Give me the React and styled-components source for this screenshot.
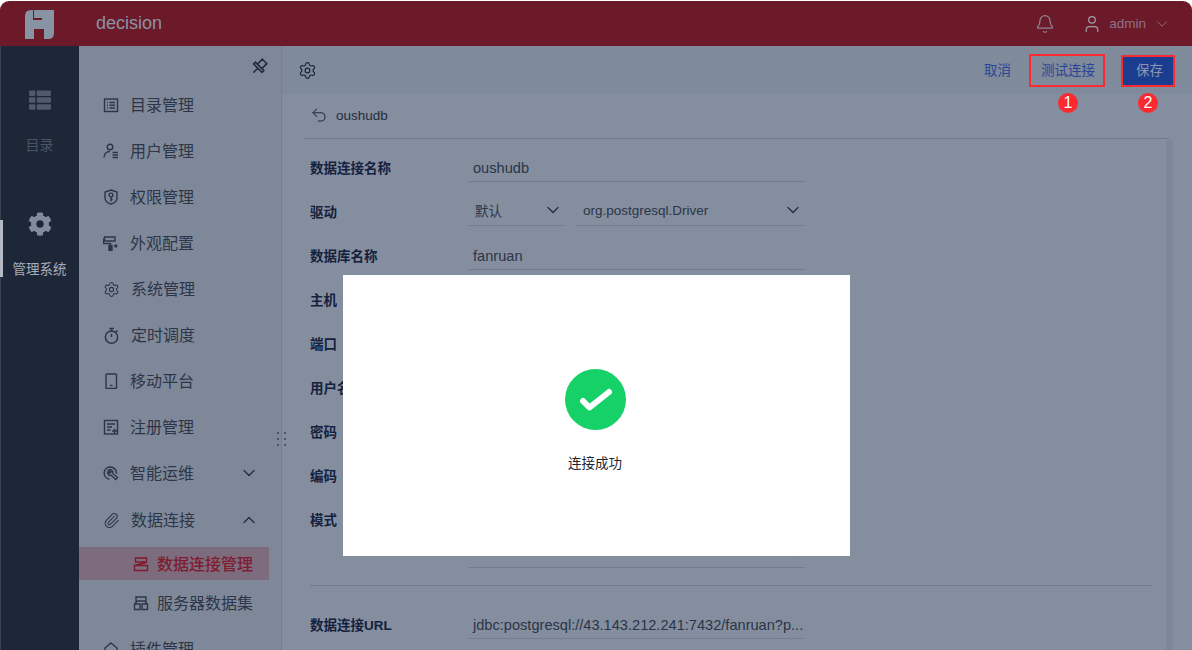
import React from 'react';
import styled, { createGlobalStyle } from 'styled-components';
import { Bell, User, ChevronDown, ChevronUp, Undo2, Paperclip, Settings } from 'lucide-react';
import { FaCog, FaThList } from 'react-icons/fa';

const Global = createGlobalStyle`
  html, body { margin: 0; padding: 0; background: #fff; }
  body { font-family: "Liberation Sans", "Noto Sans CJK SC", sans-serif; overflow: hidden; }
  * { box-sizing: border-box; }
`;

const Page = styled.div`
  position: relative;
  width: 1192px;
  height: 650px;
  padding-top: 1px;
  overflow: hidden;
  background: #fff;
`;
const Frame = styled.div`
  width: 100%;
  height: 649px;
  display: flex;
  flex-direction: column;
  border-radius: 9px 9px 0 0;
  overflow: hidden;
`;
const Header = styled.header`
  flex: 0 0 45px;
  display: flex;
  align-items: center;
  background: #6c1929;
  color: #8a93a4;
`;
const LogoBox = styled.div`
  width: 96px;
  padding-left: 25px;
  display: flex;
  margin-top: 1px;
`;
const Brand = styled.div`
  flex: 1;
  font-size: 18px;
`;
const Account = styled.div`
  display: flex;
  align-items: center;
  padding-right: 21px;
  font-size: 13.5px;
  color: #8a7488;
`;
const BellBox = styled.span`
  display: flex;
  margin-right: 27px;
  color: #8d8493;
`;
const UserBox = styled.span`
  display: flex;
  margin-right: 7px;
  color: #a19aa6;
`;
const ArrowBox = styled.span`
  display: flex;
  margin-left: 7px;
`;
const Body = styled.div`
  flex: 1;
  display: flex;
  min-height: 0;
`;
const Rail = styled.nav`
  flex: 0 0 79px;
  display: flex;
  flex-direction: column;
  background: #1e2738;
  border-left: 1px solid #39414f;
`;
const RailItem = styled.div`
  height: ${p => p.$h}px;
  display: flex;
  flex-direction: column;
  align-items: center;
  gap: ${p => p.$gap}px;
  padding-top: ${p => p.$top}px;
  margin-left: -1px;
  font-size: ${p => p.$size}px;
  color: ${p => p.$color};
  border-left: 3px solid ${p => p.$bar || 'transparent'};
  padding-right: 3px;
`;
const RailGear = styled.span`
  display: flex;
  margin-top: -8px;
`;
const Sidebar = styled.aside`
  flex: 0 0 203px;
  display: flex;
  flex-direction: column;
  padding-right: 12px;
  background: #7f8898;
  border-right: 1px solid #757f8f;
  color: #2c3648;
`;
const PinRow = styled.div`
  height: 36px;
  flex: none;
  display: flex;
  justify-content: flex-end;
  padding: 12px 1px 0 0;
`;
const MenuItem = styled.div`
  flex: none;
  height: 46px;
  margin-top: ${p => p.$mt || 0}px;
  display: flex;
  align-items: center;
  gap: 11px;
  padding: 0 10px 0 24px;
  font-size: 16px;
`;
const MenuIcon = styled.span`
  flex: 0 0 16px;
  height: 18px;
  display: flex;
  align-items: center;
  justify-content: center;
`;
const MenuLabel = styled.span`
  flex: 1;
  padding-bottom: 2px;
`;
const SubItem = styled.div`
  flex: none;
  height: 33px;
  margin-top: ${p => p.$mt}px;
  margin-bottom: ${p => p.$mb}px;
  display: flex;
  align-items: center;
  gap: 8px;
  padding-left: 54px;
  font-size: 16px;
  font-weight: ${p => (p.$active ? 500 : 400)};
  color: ${p => (p.$active ? '#7f1d30' : '#2c3648')};
  background: ${p => (p.$active ? '#7c6c7e' : 'transparent')};
`;
const SubLabel = styled.span`
  padding-bottom: 2px;
`;
const Main = styled.main`
  flex: 1;
  display: flex;
  flex-direction: column;
  min-width: 0;
  position: relative;
`;
const Toolbar = styled.div`
  flex: 0 0 48px;
  display: flex;
  align-items: center;
  padding: 1px 17px 0 16px;
  background: #7f8a9a;
  color: #1c2638;
`;
const ToolSpacer = styled.div`
  flex: 1;
`;
const LinkButton = styled.div`
  font-size: 13.5px;
  color: #2b4499;
  margin-right: 18px;
  padding-bottom: 4px;
`;
const TestButton = styled.div`
  position: relative;
  width: 76px;
  height: 33px;
  display: flex;
  align-items: center;
  justify-content: center;
  padding: 0 0 3px 2px;
  font-size: 13.5px;
  color: #2b4499;
  border: 2px solid #fb2a30;
  margin-right: 16px;
`;
const SaveButton = styled.div`
  position: relative;
  width: 54px;
  height: 32px;
  display: flex;
  align-items: center;
  justify-content: center;
  padding: 0 0 4px 3px;
  font-size: 13.5px;
  color: #8b96ae;
  background: #1b3d8f;
  border: 2px solid #fb2a30;
`;
const Badge = styled.span`
  position: absolute;
  top: calc(100% + 8px);
  left: calc(50% + ${p => p.$dx || 0}px);
  transform: translateX(-50%);
  width: 20px;
  height: 20px;
  border-radius: 50%;
  display: flex;
  align-items: center;
  justify-content: center;
  background: #fb2a30;
  color: #fff;
  font-size: 16px;
`;
const Content = styled.div`
  flex: 1;
  display: flex;
  flex-direction: column;
  padding: 0 23px 0 22px;
  background: #858e9e;
  min-height: 0;
`;
const BackRow = styled.div`
  flex: 0 0 44px;
  display: flex;
  align-items: center;
  gap: 8px;
  padding: 0 0 2px 6px;
  font-size: 13.5px;
  color: #222d40;
`;
const Card = styled.section`
  position: relative;
  flex: 1;
  padding: 7px 0 0 6px;
  border-top: 1px solid #717b8b;
  &::after {
    content: '';
    position: absolute;
    top: 1px;
    right: -4px;
    bottom: 0;
    width: 7px;
    border-radius: 4px 4px 0 0;
    background: #7d8797;
  }
`;
const Row = styled.div`
  height: 44px;
  display: flex;
  align-items: center;
`;
const Label = styled.div`
  flex: 0 0 158px;
  padding-bottom: 2px;
  font-size: 13.5px;
  font-weight: 700;
  color: #14213f;
`;
const Fields = styled.div`
  display: flex;
  gap: 11px;
  width: ${p => p.$w || 337}px;
`;
const Input = styled.div`
  flex: 1;
  height: 27px;
  display: flex;
  align-items: center;
  padding-left: 5px;
  font-size: 14.6px;
  color: #2a3548;
  border-bottom: 1px solid #727c8d;
  white-space: nowrap;
  overflow: hidden;
`;
const Select = styled.div`
  flex: ${p => (p.$w ? `0 0 ${p.$w}px` : 1)};
  height: 27px;
  display: flex;
  align-items: center;
  justify-content: space-between;
  padding: 0 2px 3px 7px;
  font-size: 13.5px;
  color: #2a3548;
  border-bottom: 1px solid #727c8d;
`;
const ExtraRow = styled.div`
  height: 26px;
  padding-left: 158px;
  display: flex;
  align-items: flex-end;
`;
const Divider = styled.hr`
  width: 842px;
  height: 1px;
  margin: 17px 0;
  border: 0;
  background: #717b8b;
`;
const Dialog = styled.div`
  position: absolute;
  left: 343px;
  top: 275px;
  width: 507px;
  height: 281px;
  display: flex;
  flex-direction: column;
  align-items: center;
  gap: 22px;
  padding: 94px 3px 0 0;
  background: #fff;
  color: #1f2530;
  font-size: 13.5px;
`;
const Dots = styled.div`
  position: absolute;
  left: -5px;
  top: 386px;
  display: grid;
  grid-template-columns: 2px 2px;
  column-gap: 5px;
  row-gap: 4px;
  & > i { width: 2px; height: 2px; background: #3a4456; border-radius: 50%; }
`;

const Svg = ({ children, size = 16, color = '#2c3648', w = 1.4 }) => (
  <svg width={size} height={size} viewBox="0 0 16 16" fill="none" stroke={color} strokeWidth={w}>{children}</svg>
);
const IconCatalog = () => <Svg><rect x="1.5" y="2" width="13" height="12.5" /><path d="M4 5.5h1M6.5 5.5h5.5M4 8.2h1M6.5 8.2h5.5M4 11h1M6.5 11h5.5" /></Svg>;
const IconUser = () => <Svg><circle cx="7" cy="4" r="2.8" /><path d="M1 14.5c.3-3.6 2.6-6 6-6M9.5 9.5h5.5M9.5 12h5.5M9.5 14.5h5.5" /></Svg>;
const IconShield = () => <Svg><path d="M8 1l6 2v6c0 3-2.600 5-6 6.200C4.600 14 2 12 2 9V3z" /><circle cx="8" cy="6" r="1.900" /><path d="M8 8v4.500M8 10.500h1.600" /></Svg>;
const IconRoller = () => (
  <Svg>
    <path d="M1.500 2h10.500v4H1.500zM1.500 4H.5v4.500h7V11" />
    <rect x="6" y="10.500" width="3" height="5" fill="#2c3648" />
    <circle cx="12.800" cy="11" r="1.700" fill="#2c3648" stroke="none" />
  </Svg>
);
const IconGear = () => <Settings size={17} strokeWidth={1.5} color="#2c3648" />;
const IconTimer = () => (
  <Svg size={17}>
    <circle cx="8" cy="9.500" r="5.800" />
    <path d="M5.800 1.300h4.400M8 1.300v2.400M8 9.500V6.300M12.300 3.300l1.300 1.300" />
  </Svg>
);
const IconPhone = () => <Svg><rect x="3" y="1" width="10.500" height="14.500" rx="0.800" /><path d="M7 12.500h2.500" /></Svg>;
const IconRegister = () => <Svg><rect x="1.500" y="1.500" width="13" height="13.500" /><path d="M4 5h8M4 8h5M4 11h3.500M9 12h5M11.500 9.500v5" /></Svg>;
const IconWrench = () => (
  <Svg>
    <path d="M13.500 8.800A6.200 6.200 0 1 0 6.500 14.300" />
    <path d="M5.500 5.200a2.800 2.800 0 0 1 4.300 3.200l4.700 4.200-1.800 2-4.600-4.300a2.800 2.800 0 0 1-3.300-3.700l2 1.600 1.300-1.300z" />
  </Svg>
);
const IconClip = () => <Paperclip size={17} strokeWidth={1.5} color="#2c3648" />;
const IconDb = ({ color }) => <Svg color={color}><path d="M2.500 2h11v4h-11zM1.500 9.500l12-3M1.500 9.500h13v5h-13z" /></Svg>;
const IconServer = () => <Svg><path d="M3 2h10v4H3zM1.500 9h5.500v5.500H1.500zM9 9h5.500v5.500H9zM4 6L2 9M12 6l2 3" /></Svg>;
const IconPlugin = () => <Svg><path d="M8 2l6 5v8H2V7z" /></Svg>;
const IconPin = () => (
  <Svg size={18} color="#1f2a3d">
    <g transform="rotate(45 8 8)">
      <path d="M5.200 1h5.600v6.200H5.200zM2.800 7.200h10.400v2.300H2.800zM8 9.500V15" />
    </g>
  </Svg>
);
const Logo = () => (
  <svg width="29" height="29" viewBox="0 0 29 29">
    <path fill="#8893a3" d="M0 29V6Q0 0 6 0H8V10H17V8H9V0H29V23Q29 29 23 29H19V19H9V29Z" />
  </svg>
);
const IconCheck = () => (
  <svg width="61" height="61" viewBox="0 0 61 61">
    <circle cx="30.500" cy="30.500" r="30.500" fill="#16d068" />
    <path d="M18 32L24.500 38.500L44 23" fill="none" stroke="#fff" strokeWidth="6" strokeLinecap="round" strokeLinejoin="round" />
  </svg>
);

const menu = [
  [IconCatalog, '目录管理'],
  [IconUser, '用户管理'],
  [IconShield, '权限管理'],
  [IconRoller, '外观配置'],
  [IconGear, '系统管理'],
  [IconTimer, '定时调度'],
  [IconPhone, '移动平台'],
  [IconRegister, '注册管理'],
  [IconWrench, '智能运维', 'down'],
  [IconClip, '数据连接', 'up', 1],
];
const hiddenRows = ['主机', '端口', '用户名', '密码', '编码'];

const Chevron = ({ dir }) => {
  const C = dir === 'up' ? ChevronUp : ChevronDown;
  return <C size={20} strokeWidth={1.5} color="#222d40" />;
};

export default function App() {
  return (
    <Page>
      <Global />
      <Frame>
        <Header>
          <LogoBox><Logo /></LogoBox>
          <Brand>decision</Brand>
          <Account>
            <BellBox><Bell size={20} strokeWidth={1.5} /></BellBox>
            <UserBox><User size={20} strokeWidth={1.5} /></UserBox>
            admin
            <ArrowBox><ChevronDown size={18} strokeWidth={1.3} /></ArrowBox>
          </Account>
        </Header>
        <Body>
          <Rail>
            <RailItem $h={174} $top={43} $gap={23} $size={14} $color="#4a5466">
              <FaThList size={22} color="#4f5a6c" />
              目录
            </RailItem>
            <RailItem $h={57} $top={0} $gap={22} $size={13.5} $color="#a6adb8" $bar="#b4b9c3">
              <RailGear><FaCog size={24} color="#828c9c" /></RailGear>
              管理系统
            </RailItem>
          </Rail>
          <Sidebar>
            <PinRow><IconPin /></PinRow>
            {menu.map(([Icon, text, arrow, mt]) => (
              <MenuItem key={text} $mt={mt}>
                <MenuIcon><Icon /></MenuIcon>
                <MenuLabel>{text}</MenuLabel>
                {arrow && <Chevron dir={arrow} />}
              </MenuItem>
            ))}
            <SubItem $active $mt={4} $mb={6}><IconDb color="#81192f" /><SubLabel>数据连接管理</SubLabel></SubItem>
            <SubItem $mt={0} $mb={7}><IconServer /><SubLabel>服务器数据集</SubLabel></SubItem>
            <MenuItem><MenuIcon><IconPlugin /></MenuIcon><MenuLabel>插件管理</MenuLabel></MenuItem>
          </Sidebar>
          <Main>
            <Dots><i /><i /><i /><i /><i /><i /></Dots>
            <Toolbar>
              <Settings size={19} strokeWidth={1.5} />
              <ToolSpacer />
              <LinkButton>取消</LinkButton>
              <TestButton>测试连接<Badge $dx={1}>1</Badge></TestButton>
              <SaveButton>保存<Badge>2</Badge></SaveButton>
            </Toolbar>
            <Content>
              <BackRow><Undo2 size={18} strokeWidth={1.4} />oushudb</BackRow>
              <Card>
                <Row>
                  <Label>数据连接名称</Label>
                  <Fields><Input>oushudb</Input></Fields>
                </Row>
                <Row>
                  <Label>驱动</Label>
                  <Fields>
                    <Select $w={97}>默认<Chevron /></Select>
                    <Select>org.postgresql.Driver<Chevron /></Select>
                  </Fields>
                </Row>
                <Row>
                  <Label>数据库名称</Label>
                  <Fields><Input>fanruan</Input></Fields>
                </Row>
                {hiddenRows.map(l => (
                  <Row key={l}>
                    <Label>{l}</Label>
                    <Fields><Input /></Fields>
                  </Row>
                ))}
                <Row>
                  <Label>模式</Label>
                  <Fields><Input /></Fields>
                </Row>
                <ExtraRow>
                  <Fields><Select><span /><Chevron /></Select></Fields>
                </ExtraRow>
                <Divider />
                <Row>
                  <Label>数据连接URL</Label>
                  <Fields $w={335}><Input>jdbc:postgresql://43.143.212.241:7432/fanruan?p...</Input></Fields>
                </Row>
              </Card>
            </Content>
          </Main>
        </Body>
      </Frame>
      <Dialog>
        <IconCheck />
        <span>连接成功</span>
      </Dialog>
    </Page>
  );
}
